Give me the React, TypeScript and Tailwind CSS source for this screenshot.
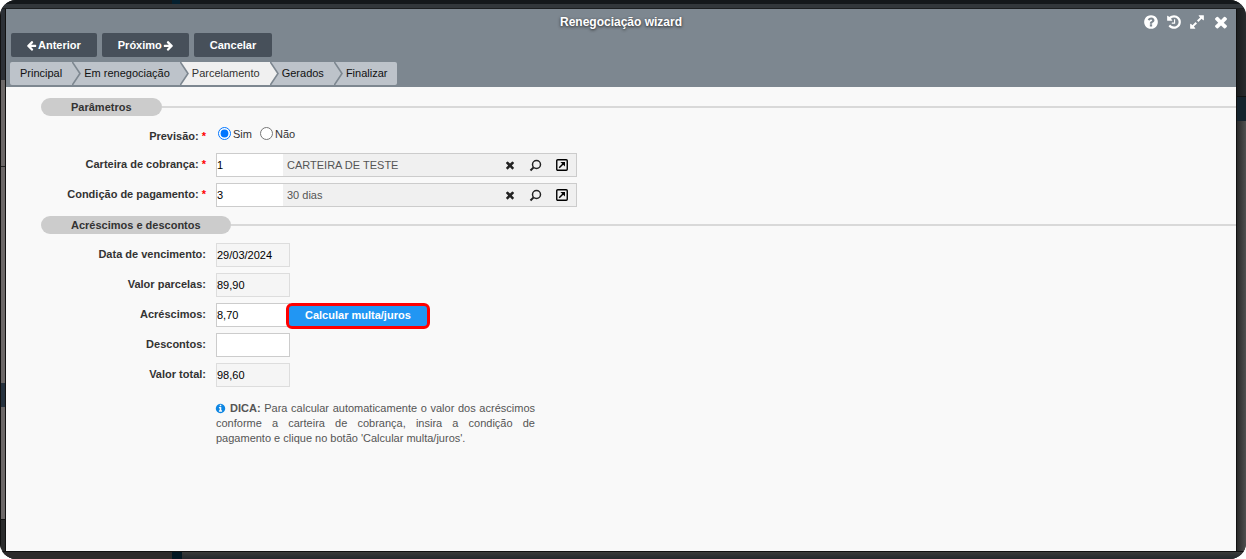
import React, { useState } from 'react';
import clsx from 'clsx';

const ICONS = {
  question:
    'M1024 1376v-192q0-14-9-23t-23-9h-192q-14 0-23 9t-9 23v192q0 14 9 23t23 9h192q14 0 23-9t9-23zm256-672q0-88-55.5-163t-138.5-116-170-41q-243 0-371 213-15 24 8 42l132 100q7 6 19 6 16 0 25-12 53-68 86-92 34-24 86-24 48 0 85.5 26t37.5 59q0 38-20 61t-68 45q-63 28-115.5 86.5t-52.5 125.5v36q0 14 9 23t23 9h192q14 0 23-9t9-23q0-19 21.5-49.5t54.5-49.5q32-18 49-28.5t46-35 44.5-48 28-60.5 12.5-81zm384 192q0 209-103 385.5t-279.5 279.5-385.5 103-385.5-103-279.5-279.5-103-385.5 103-385.5 279.5-279.5 385.5-103 385.5 103 279.5 279.5 103 385.5z',
  info: 'M1152 1376v-160q0-14-9-23t-23-9h-96v-512q0-14-9-23t-23-9h-320q-14 0-23 9t-9 23v160q0 14 9 23t23 9h96v320h-96q-14 0-23 9t-9 23v160q0 14 9 23t23 9h448q14 0 23-9t9-23zm-128-896v-160q0-14-9-23t-23-9h-192q-14 0-23 9t-9 23v160q0 14 9 23t23 9h192q14 0 23-9t9-23zm640 416q0 209-103 385.5t-279.5 279.5-385.5 103-385.5-103-279.5-279.5-103-385.5 103-385.5 279.5-279.5 385.5-103 385.5 103 279.5 279.5 103 385.5z',
  history:
    'M1664 896q0 156-61 298t-164 245-245 164-298 61q-172 0-327-72.5t-264-204.5q-7-10-6.5-22.5t8.5-20.5l137-138q10-9 25-9 16 2 23 12 73 95 179 147t225 52q104 0 198.5-40.5t163.5-109.5 109.5-163.5 40.5-198.5-40.5-198.5-109.5-163.5-163.5-109.5-198.5-40.5q-98 0-188 35.5t-160 101.5l137 138q31 30 14 69-17 40-59 40h-448q-26 0-45-19t-19-45v-448q0-42 40-59 39-17 69 14l130 129q107-101 244.5-156.5t284.5-55.5q156 0 298 61t245 164 164 245 61 298zm-640-288v448q0 14-9 23t-23 9h-320q-14 0-23-9t-9-23v-64q0-14 9-23t23-9h224v-352q0-14 9-23t23-9h64q14 0 23 9t9 23z',
  expand:
    'M883 1056q0 13-10 23l-332 332 144 144q19 19 19 45t-19 45-45 19h-448q-26 0-45-19t-19-45v-448q0-26 19-45t45-19 45 19l144 144 332-332q10-10 23-10t23 10l114 114q10 10 10 23zm781-864v448q0 26-19 45t-45 19-45-19l-144-144-332 332q-10 10-23 10t-23-10l-114-114q-10-10-10-23t10-23l332-332-144-144q-19-19-19-45t19-45 45-19h448q26 0 45 19t19 45z',
  times:
    'M1490 1322q0 40-28 68l-136 136q-28 28-68 28t-68-28l-294-294-294 294q-28 28-68 28t-68-28l-136-136q-28-28-28-68t28-68l294-294-294-294q-28-28-28-68t28-68l136-136q28-28 68-28t68 28l294 294 294-294q28-28 68-28t68 28l136 136q28 28 28 68t-28 68l-294 294 294 294q28 28 28 68z',
  arrow:
    'M1664 896v128q0 53-32.5 90.5t-84.5 37.5h-704l293 294q38 36 38 90t-38 90l-75 76q-37 37-90 37-52 0-91-37l-651-652q-37-37-37-90 0-52 37-91l651-650q38-38 91-38 52 0 90 38l75 74q38 38 38 91t-38 91l-293 293h704q52 0 84.5 37.5t32.5 90.5z',
};

function Icon({ name, className }: { name: keyof typeof ICONS; className?: string }) {
  return (
    <svg viewBox="0 0 1792 1792" fill="currentColor" aria-hidden="true" className={className}>
      <path d={ICONS[name]} />
    </svg>
  );
}

const windowActions: { icon: keyof typeof ICONS; label: string; size: string }[] = [
  { icon: 'question', label: 'Ajuda', size: 'size-4' },
  { icon: 'history', label: 'Histórico', size: 'size-4' },
  { icon: 'expand', label: 'Expandir', size: 'size-4' },
  { icon: 'times', label: 'Fechar', size: 'size-[18px]' },
];

const steps = ['Principal', 'Em renegociação', 'Parcelamento', 'Gerados', 'Finalizar'];

function StepDivider({ before, after }: { before: string; after: string }) {
  return (
    <svg viewBox="0 0 9 23" className="h-[23px] w-[9px] shrink-0" aria-hidden="true">
      <path d="M0 0h9v23H0z" className={after} />
      <path d="M0 0l8 11.5L0 23z" className={before} />
      <path d="M0 -0.5l8 12L0 23.5" fill="none" stroke="#7d8790" strokeWidth="1.6" />
    </svg>
  );
}

function Steps({ active, onChange }: { active: number; onChange: (index: number) => void }) {
  const fill = (index: number) => (index === active ? 'fill-[#f0f0f0]' : 'fill-[#bdc3ca]');

  return (
    <nav className="flex overflow-hidden rounded-xs">
      {steps.map((step, index) => (
        <React.Fragment key={step}>
          {index > 0 && <StepDivider before={fill(index - 1)} after={fill(index)} />}
          <button
            type="button"
            onClick={() => onChange(index)}
            className={clsx(
              'h-[23px] whitespace-nowrap pr-[10px]',
              index === 0 ? 'pl-[10px]' : 'pl-[3px]',
              index === active ? 'bg-[#f0f0f0] text-[#333]' : 'bg-[#bdc3ca] text-[#111]',
            )}
          >
            {step}
          </button>
        </React.Fragment>
      ))}
    </nav>
  );
}

function ToolbarButton({ children }: { children: React.ReactNode }) {
  return (
    <button
      type="button"
      className="flex h-6 items-center rounded-xs bg-[#47505a] px-4 font-bold text-white"
    >
      {children}
    </button>
  );
}

function SectionTitle({ children }: { children: React.ReactNode }) {
  return (
    <div className="flex items-center pl-[35px]">
      <h2 className="h-[18px] rounded-full bg-[#ccc] px-[30px] font-bold leading-[18px] text-[#333]">
        {children}
      </h2>
      <div className="h-0.5 flex-1 bg-[#d9d9d9]" />
    </div>
  );
}

interface RowProps {
  label: string;
  htmlFor: string;
  required?: boolean;
  children: React.ReactNode;
}

function Row({ label, htmlFor, required, children }: RowProps) {
  return (
    <div className="flex h-6">
      <label htmlFor={htmlFor} className="w-[200px] shrink-0 pt-1 text-right font-bold text-[#333]">
        {label}:{required && <span className="text-[#f00]"> *</span>}
      </label>
      <div className="ml-[10px] flex items-start">{children}</div>
    </div>
  );
}

function LookupField({ id, code, text }: { id: string; code: string; text: string }) {
  return (
    <div className="flex h-6 w-[361px] items-center border border-[#ccc] bg-[#f0f0f0]">
      <input id={id} defaultValue={code} className="h-full w-[66px] bg-white text-black" />
      <span className="flex-1 pl-1 text-[#555]">{text}</span>
      <div className="flex items-center gap-[13px] pr-[7px] text-[#222]">
        <button type="button" aria-label="Limpar">
          <Icon name="times" className="size-3" />
        </button>
        <button type="button" aria-label="Pesquisar">
          <svg viewBox="0 0 13 13" className="size-[13px]" fill="none" stroke="currentColor">
            <circle cx="7.5" cy="5.5" r="4" strokeWidth="1.5" />
            <path d="M4.6 8.4L1.5 11.5" strokeWidth="2" />
          </svg>
        </button>
        <button type="button" aria-label="Abrir cadastro">
          <svg viewBox="0 0 14 14" className="size-[14px]" fill="none" stroke="#000">
            <rect x="1.75" y="1.75" width="10.5" height="10.5" rx="1" strokeWidth="1.4" />
            <path d="M4.2 9.8L8.5 5.5" strokeWidth="1.5" />
            <path d="M5.4 4h4.6v4.6z" fill="#000" stroke="none" />
          </svg>
        </button>
      </div>
    </div>
  );
}

interface ValueFieldProps {
  id: string;
  value?: string;
  readOnly?: boolean;
}

function ValueField({ id, value = '', readOnly }: ValueFieldProps) {
  return (
    <input
      id={id}
      defaultValue={value}
      readOnly={readOnly}
      className={clsx(
        'h-6 w-[74px] border text-black',
        readOnly ? 'border-[#ddd] bg-[#f5f5f5]' : 'border-[#ccc] bg-white',
      )}
    />
  );
}

export default function App() {
  const [step, setStep] = useState(2);
  const [forecast, setForecast] = useState('Sim');

  return (
    <div className="flex h-screen flex-col overflow-hidden rounded-2xl bg-[#2b2c2d] font-['Liberation_Sans',Arial,sans-serif] text-[11px] leading-[15px]">
      {/* Dimmed page behind the dialog */}
      <div className="flex h-1 shrink-0 bg-[#14181b]">
        <div className="ml-[172px] w-2 bg-[#04202f]" />
      </div>
      <div className="h-[5px] shrink-0 border-b border-[#1c1f21] bg-[#32373b]" />

      <div className="flex min-h-0 flex-1">
        <div className="flex w-[6px] shrink-0 flex-col border-x border-[#111]">
          <div className="h-[71px] bg-[#2c3036]" />
          <div className="h-[87px] border-b border-[#222] bg-[#6c6868]" />
          <div className="h-[216px] bg-[#6c6868]" />
          <div className="h-6 bg-[#26323f]" />
          <div className="h-[113px] border-b border-[#111] bg-[#6c6868]" />
        </div>

        <main className="flex min-w-0 flex-1 flex-col bg-[#f9f9f9]">
          <header className="bg-[#7d8790] pb-0.5">
            <div className="relative flex h-6 items-center justify-center">
              <h1 className="pt-0.5 text-xs font-bold text-white [text-shadow:0_1px_3px_#222]">
                Renegociação wizard
              </h1>
              <div className="absolute right-[6px] top-1 flex h-[18px] items-center gap-[7px] text-white">
                {windowActions.map(({ icon, label, size }) => (
                  <button key={icon} type="button" aria-label={label}>
                    <Icon name={icon} className={size} />
                  </button>
                ))}
              </div>
            </div>
            <div className="flex gap-[5px] pl-[5px]">
              <ToolbarButton>
                <Icon name="arrow" className="-ml-px mr-px size-[11px]" />
                <span>Anterior</span>
              </ToolbarButton>
              <ToolbarButton>
                <span>Próximo</span>
                <Icon name="arrow" className="-mr-px ml-px size-[11px] -scale-x-100" />
              </ToolbarButton>
              <ToolbarButton>Cancelar</ToolbarButton>
            </div>
            <div className="flex pl-1 pt-[5px]">
              <Steps active={step} onChange={setStep} />
            </div>
          </header>

          <form className="pt-[11px]" onSubmit={(e) => e.preventDefault()}>
            <SectionTitle>Parâmetros</SectionTitle>
            <div className="flex flex-col gap-[6px] pb-[9px] pt-[7px]">
              <div className="flex h-6">
                <span className="w-[200px] shrink-0 pt-[6px] text-right font-bold text-[#333]">
                  Previsão:<span className="text-[#f00]"> *</span>
                </span>
                <div className="ml-3 flex items-start gap-2 pt-1" role="radiogroup">
                  {['Sim', 'Não'].map((option) => (
                    <label key={option} className="flex items-start gap-0.5 text-[#333]">
                      <input
                        type="radio"
                        name="previsao"
                        checked={forecast === option}
                        onChange={() => setForecast(option)}
                        className="size-[13px]"
                      />
                      {option}
                    </label>
                  ))}
                </div>
              </div>
              <Row label="Carteira de cobrança" htmlFor="carteira" required>
                <LookupField id="carteira" code="1" text="CARTEIRA DE TESTE" />
              </Row>
              <Row label="Condição de pagamento" htmlFor="condicao" required>
                <LookupField id="condicao" code="3" text="30 dias" />
              </Row>
            </div>

            <SectionTitle>Acréscimos e descontos</SectionTitle>
            <div className="flex flex-col gap-[6px] pt-[9px]">
              <Row label="Data de vencimento" htmlFor="vencimento">
                <ValueField id="vencimento" value="29/03/2024" readOnly />
              </Row>
              <Row label="Valor parcelas" htmlFor="parcelas">
                <ValueField id="parcelas" value="89,90" readOnly />
              </Row>
              <Row label="Acréscimos" htmlFor="acrescimos">
                <ValueField id="acrescimos" value="8,70" />
                <button
                  type="button"
                  className="-ml-1 h-[26px] rounded-md border-3 border-[#f00] bg-[#2196f3] px-4 pb-0.5 font-bold text-white"
                >
                  Calcular multa/juros
                </button>
              </Row>
              <Row label="Descontos" htmlFor="descontos">
                <ValueField id="descontos" />
              </Row>
              <Row label="Valor total" htmlFor="total">
                <ValueField id="total" value="98,60" readOnly />
              </Row>
            </div>

            <p className="ml-[210px] mt-[14px] w-[319px] text-justify text-[#555]">
              <Icon
                name="info"
                className="-ml-px mr-1 inline size-[11px] align-[-2px] text-[#0d86e3]"
              />
              <b>DICA:</b> Para calcular automaticamente o valor dos acréscimos conforme a carteira
              de cobrança, insira a condição de pagamento e clique no botão &apos;Calcular
              multa/juros&apos;.
            </p>
          </form>
        </main>

        <div className="flex w-[10px] shrink-0 flex-col border-l border-[#111]">
          <div className="h-[88px] border-b border-[#111] bg-linear-to-r from-[#1a1c1e] to-[#292b2e]" />
          <div className="h-6 bg-[#15232d]" />
          <div className="flex-1 bg-linear-to-r from-[#2a2a2a] to-[#505050]" />
        </div>
      </div>

      <div className="flex h-2 shrink-0 border-t border-[#111] bg-linear-to-b from-[#3a3b3a] to-[#23282c]">
        <div className="w-[172px] bg-[#2c2a2a]" />
        <div className="w-[10px] bg-[#021722]" />
      </div>
    </div>
  );
}
